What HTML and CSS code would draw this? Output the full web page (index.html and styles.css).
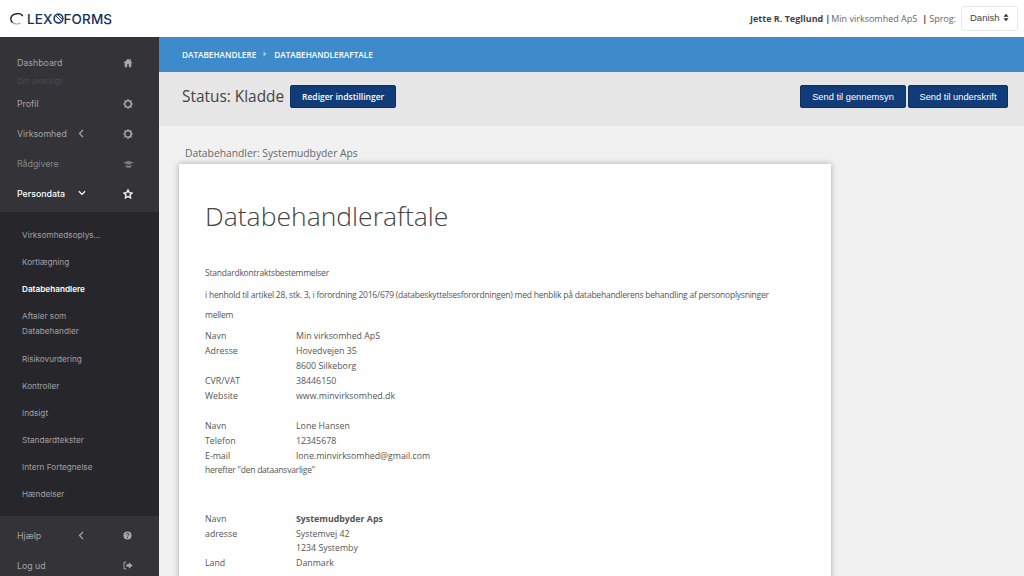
FILE: index.html
```html
<!DOCTYPE html>
<html lang="en">
<head>
    <meta charset="UTF-8">
    <title>Databehandleraftale</title>
    <link rel="stylesheet" href="styles.css">
</head>
<body>

    <header class="topbar">
        <div class="logo">
            <svg class="logo-mark" width="14" height="12" viewBox="0 0 14 12">
                <path d="M12.8 3.2C11.5 1 9 0.4 6.6 0.8C3 1.4 0.8 3.6 0.8 6.2C0.8 7.8 1.6 9 3 9.6" fill="none" stroke="#1c2230" stroke-width="1.4"/>
                <path d="M2.5 9.5C5 11.6 8.6 11.4 10.4 9.6" fill="none" stroke="#9aa0aa" stroke-width="1.2"/>
            </svg>
            <span>LEX</span><svg class="logo-o" width="11" height="13" viewBox="0 0 11 13"><circle cx="5.5" cy="6.5" r="4.4" fill="none" stroke="#143a70" stroke-width="1.6"/><path d="M2.5 3.5L8.5 9.5M4.5 2.5L9.5 7.5" stroke="#143a70" stroke-width="1"/></svg><span>FORMS</span>
        </div>
        <div class="user-info">
            <span class="user-name">Jette R. Tegllund</span>
            <span class="sep">|</span>
            <span>Min virksomhed ApS</span>
            <span class="sep sep-wide">|</span>
            <span>Sprog:</span>
            <div class="lang-select">
                Danish
                <svg width="6" height="9" viewBox="0 0 7 10"><path d="M3.5 0.5L6.5 4H0.5ZM3.5 9.5L0.5 6H6.5Z" fill="#333"/></svg>
            </div>
        </div>
    </header>

    <div class="layout">
        <nav class="sidebar">
            <div class="nav-main">
                <a class="nav-item nav-first">
                    <span class="nav-label">Dashboard</span>
                    <svg class="nav-icon" width="10" height="10" viewBox="0 0 12 12"><path d="M6 1L0.5 6H2V11H5V7.5H7V11H10V6H11.5L9.5 4.2V1.5H8V2.8Z" fill="#a8a8a8"/></svg>
                </a>
                <div class="nav-sub">Din oversigt</div>
                <a class="nav-item nav-profil">
                    <span class="nav-label">Profil</span>
                    <svg class="nav-icon" width="10" height="10" viewBox="0 0 12 12"><circle cx="6" cy="6" r="3.8" fill="none" stroke="#a8a8a8" stroke-width="1.8"/><path d="M6 0V2M6 10V12M0 6H2M10 6H12M1.8 1.8L3 3M9 9L10.2 10.2M10.2 1.8L9 3M3 9L1.8 10.2" stroke="#a8a8a8" stroke-width="1.3"/></svg>
                </a>
                <a class="nav-item">
                    <span class="nav-label">Virksomhed</span>
                    <svg class="nav-arrow" width="6" height="9" viewBox="0 0 6 9"><path d="M5 1L1.5 4.5L5 8" fill="none" stroke="#a8a8a8" stroke-width="1.2"/></svg>
                    <svg class="nav-icon" width="10" height="10" viewBox="0 0 12 12"><circle cx="6" cy="6" r="3.8" fill="none" stroke="#a8a8a8" stroke-width="1.8"/><path d="M6 0V2M6 10V12M0 6H2M10 6H12M1.8 1.8L3 3M9 9L10.2 10.2M10.2 1.8L9 3M3 9L1.8 10.2" stroke="#a8a8a8" stroke-width="1.3"/></svg>
                </a>
                <a class="nav-item nav-dim">
                    <span class="nav-label">Rådgivere</span>
                    <svg class="nav-icon" width="11" height="10" viewBox="0 0 13 12"><path d="M6.5 2L13 4.5L6.5 7L0 4.5Z" fill="#7c7c7c"/><path d="M3 7V9.5C5 11 8 11 10 9.5V7L6.5 8.3Z" fill="#7c7c7c"/></svg>
                </a>
                <a class="nav-item nav-active">
                    <span class="nav-label">Persondata</span>
                    <svg class="nav-arrow" width="8" height="6" viewBox="0 0 9 6"><path d="M1 1L4.5 4.5L8 1" fill="none" stroke="#fff" stroke-width="1.4"/></svg>
                    <svg class="nav-icon" width="10" height="10" viewBox="0 0 12 12"><path d="M6 1L7.5 4.3L11 4.7L8.4 7.1L9.1 10.7L6 8.9L2.9 10.7L3.6 7.1L1 4.7L4.5 4.3Z" fill="none" stroke="#fff" stroke-width="1.5"/></svg>
                </a>
            </div>
            <ul class="submenu">
                <li>Virksomhedsoplys...</li>
                <li>Kortlægning</li>
                <li class="submenu-active">Databehandlere</li>
                <li class="submenu-double">Aftaler som Databehandler</li>
                <li>Risikovurdering</li>
                <li>Kontroller</li>
                <li>Indsigt</li>
                <li>Standardtekster</li>
                <li>Intern Fortegnelse</li>
                <li>Hændelser</li>
            </ul>
            <div class="nav-bottom">
                <a class="nav-item">
                    <span class="nav-label">Hjælp</span>
                    <svg class="nav-arrow" width="6" height="9" viewBox="0 0 6 9"><path d="M5 1L1.5 4.5L5 8" fill="none" stroke="#a8a8a8" stroke-width="1.2"/></svg>
                    <svg class="nav-icon" width="9" height="9" viewBox="0 0 11 11"><circle cx="5.5" cy="5.5" r="5" fill="#a8a8a8"/><path d="M3.8 4.2C3.9 2.4 7.2 2.5 7.2 4.2C7.2 5.3 5.5 5.2 5.5 6.5" fill="none" stroke="#333338" stroke-width="1.2"/><rect x="4.9" y="7.5" width="1.2" height="1.2" fill="#333338"/></svg>
                </a>
                <a class="nav-item">
                    <span class="nav-label">Log ud</span>
                    <svg class="nav-icon" width="10" height="9" viewBox="0 0 12 10"><path d="M4 1H1.2V9H4" fill="none" stroke="#a8a8a8" stroke-width="1.2"/><path d="M4 3.5H7V1L11.5 5L7 9V6.5H4Z" fill="#a8a8a8"/></svg>
                </a>
            </div>
        </nav>

        <main class="content">
            <div class="breadcrumb">
                <span>DATABEHANDLERE</span>
                <svg width="4" height="6" viewBox="0 0 4 6"><path d="M0.5 0.5L3.5 3L0.5 5.5Z" fill="#a8cbe8"/></svg>
                <span>DATABEHANDLERAFTALE</span>
            </div>
            <div class="status-bar">
                <h2>Status: Kladde</h2>
                <button class="btn btn-edit">Rediger indstillinger</button>
                <div class="status-actions">
                    <button class="btn btn-review">Send til gennemsyn</button>
                    <button class="btn btn-sign">Send til underskrift</button>
                </div>
            </div>
            <div class="doc-area">
                <div class="doc-caption">Databehandler: Systemudbyder Aps</div>
                <article class="doc">
                    <h1>Databehandleraftale</h1>
                    <p class="doc-first">Standardkontraktsbestemmelser</p>
                    <p>i henhold til artikel 28, stk. 3, i forordning 2016/679 (databeskyttelsesforordningen) med henblik på databehandlerens behandling af personoplysninger</p>
                    <p>mellem</p>
                    <dl class="info">
                        <dt>Navn</dt><dd>Min virksomhed ApS</dd>
                        <dt>Adresse</dt><dd>Hovedvejen 35</dd>
                        <dt></dt><dd>8600 Silkeborg</dd>
                        <dt>CVR/VAT</dt><dd>38446150</dd>
                        <dt>Website</dt><dd>www.minvirksomhed.dk</dd>
                    </dl>
                    <dl class="info info-contact">
                        <dt>Navn</dt><dd>Lone Hansen</dd>
                        <dt>Telefon</dt><dd>12345678</dd>
                        <dt>E-mail</dt><dd>lone.minvirksomhed@gmail.com</dd>
                    </dl>
                    <p class="doc-after">herefter "den dataansvarlige"</p>
                    <dl class="info info-vendor">
                        <dt>Navn</dt><dd><strong>Systemudbyder Aps</strong></dd>
                        <dt>adresse</dt><dd>Systemvej 42</dd>
                        <dt></dt><dd>1234 Systemby</dd>
                        <dt>Land</dt><dd>Danmark</dd>
                    </dl>
                </article>
            </div>
        </main>
    </div>

</body>
</html>
```

FILE: styles.css
```css
* {
    box-sizing: border-box;
}
html, body {
    height: 576px;
    overflow: hidden;
}
body {
    margin: 0;
    font-family: "Open Sans", sans-serif;
    background-color: #f1f1f1;
    color: #555;
}
.topbar {
    height: 37px;
    background-color: white;
    display: flex;
    align-items: center;
    justify-content: space-between;
    padding: 0 6px 0 10px;
}
.logo {
    display: flex;
    align-items: center;
    font-family: Inter, sans-serif;
    font-size: 13.5px;
    font-weight: 500;
    color: #14305c;
    letter-spacing: 0.1px;
}
.logo-mark {
    margin-right: 3px;
}
.user-info {
    display: flex;
    align-items: center;
    padding-bottom: 1px;
    font-size: 9px;
    color: #666;
}
.user-name {
    font-weight: 700;
    color: #444;
}
.sep {
    margin: 0 1px 0 2px;
    font-weight: 700;
    color: #444;
}
.sep-wide {
    margin: 0 2px 0 5px;
}
.lang-select {
    width: 57px;
    height: 25px;
    margin-left: 5px;
    padding: 0 8px 2px 8px;
    display: flex;
    align-items: center;
    justify-content: space-between;
    border: 1px solid #e8e8e8;
    border-radius: 3px;
    font-family: "Liberation Sans", sans-serif;
    font-size: 9.5px;
    color: #444;
}
.layout {
    display: flex;
    height: 539px;
}
.sidebar {
    width: 159px;
    flex-shrink: 0;
    background-color: #333338;
    font-family: Inter, sans-serif;
    display: flex;
    flex-direction: column;
}
.nav-main {
    height: 175px;
    flex-shrink: 0;
    padding-top: 10px;
}
.nav-item {
    height: 30px;
    display: flex;
    align-items: center;
    position: relative;
    padding-left: 17px;
    font-size: 8.8px;
    color: #a4a4a6;
}
.nav-sub {
    height: 10px;
    margin-top: -1px;
    margin-bottom: 2px;
    padding-left: 17px;
    font-size: 8px;
    line-height: 10px;
    color: #4c4c54;
}
.nav-label {
    width: 59px;
}
.nav-arrow {
    margin-left: 2px;
}
.nav-icon {
    position: absolute;
    left: 123px;
    top: 11px;
}
.nav-dim {
    color: #858587;
}
.nav-active {
    color: white;
    font-weight: 500;
}
.submenu {
    list-style: none;
    margin: 0;
    padding: 10px 0 9px;
    height: 304px;
    flex-shrink: 0;
    background-color: #27272b;
    font-size: 8.2px;
    color: #a0a0a3;
}
.submenu li {
    height: 27px;
    padding-left: 22px;
    line-height: 27px;
}
.submenu .submenu-active {
    color: white;
    font-weight: 600;
}
.submenu .submenu-double {
    width: 100px;
    height: 43px;
    padding-top: 6px;
    line-height: 15px;
}
.nav-bottom {
    padding-top: 4px;
}
.content {
    flex: 1;
    min-width: 0;
}
.breadcrumb {
    height: 35px;
    padding-left: 23px;
    padding-bottom: 1px;
    background-color: #3e8bcb;
    display: flex;
    align-items: center;
    gap: 7px;
    font-size: 8.2px;
    font-weight: 600;
    color: white;
}
.status-bar {
    height: 54px;
    padding: 0 16px 5px 23px;
    background-color: #e6e6e6;
    display: flex;
    align-items: center;
}
.status-bar h2 {
    margin: 0;
    font-size: 15.4px;
    font-weight: 500;
    color: #444;
}
.btn {
    height: 23px;
    padding: 0;
    background-color: #123c78;
    color: white;
    border: 1px solid #0e2f60;
    border-radius: 2px;
    font-family: "Liberation Sans", sans-serif;
    font-size: 9.3px;
}
.btn-edit {
    width: 106px;
    margin-left: 6px;
    font-family: "Open Sans", sans-serif;
    font-weight: 600;
    font-size: 8.5px;
}
.btn-review {
    width: 106px;
}
.btn-sign {
    width: 100px;
}
.status-actions {
    margin-left: auto;
    display: flex;
    gap: 2px;
}
.doc-area {
    padding: 20px 0 0 20px;
}
.doc-caption {
    padding-left: 6px;
    height: 18px;
    font-size: 10.3px;
    line-height: 14px;
    color: #666;
}
.doc {
    width: 652px;
    height: 420px;
    padding: 34px 26px 0;
    background-color: white;
    box-shadow: 0 0 6px rgba(0, 0, 0, 0.3);
    font-size: 8.5px;
    letter-spacing: -0.23px;
    color: #555;
}
.doc h1 {
    margin: 0 0 33px;
    font-size: 26.5px;
    font-weight: 300;
    line-height: 36px;
    letter-spacing: 0;
    color: #444;
}
.doc p {
    margin: 0 0 8px;
    line-height: 12px;
}
.doc .doc-first {
    margin-bottom: 10px;
}
.info {
    display: grid;
    grid-template-columns: 91px 1fr;
    grid-auto-rows: 15px;
    margin: 0;
    font-size: 8.8px;
    line-height: 15px;
    letter-spacing: 0;
}
.info dt, .info dd {
    margin: 0;
}
.info-contact {
    margin-top: 15px;
}
.doc .doc-after {
    margin: 0;
}
.info-vendor {
    margin-top: 36px;
    grid-auto-rows: 14.5px;
}
```
